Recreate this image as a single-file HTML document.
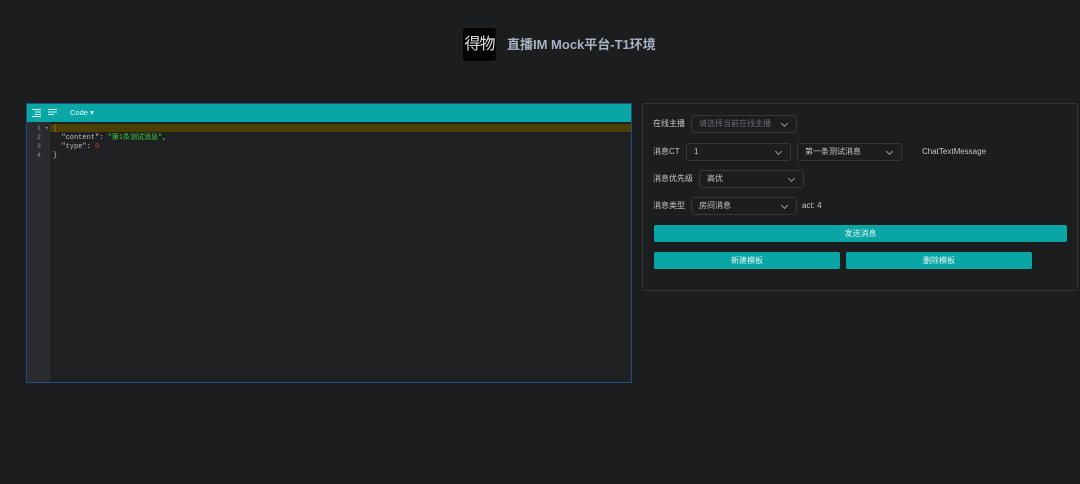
<!DOCTYPE html>
<html><head><meta charset="utf-8"><style>
*{margin:0;padding:0;box-sizing:border-box}
body{width:1080px;height:484px;background:#1c1d1f;font-family:"Liberation Sans","Noto Sans CJK SC",sans-serif;position:relative;overflow:hidden;color:#c9cdd2}
.abs{position:absolute}
.logo{left:463px;top:28px;width:33px;height:33px;background:#050505;border-radius:3px;color:#e0e0e0;font-size:16px;font-weight:normal;text-align:center;line-height:33px;letter-spacing:-1px}
.title{left:507px;top:36px;font-size:13px;font-weight:bold;color:#a7b3c2;line-height:18px}
.editor{left:26px;top:103px;width:606px;height:280px;border:1px solid #1f4f7a;background:#1f2022}
.tb{left:0;top:0;width:604px;height:18px;background:#0aa6a6}
.gut{left:0;top:18px;width:23px;height:260px;background:#292b2e}
.hl{left:23px;top:20px;width:581px;height:8px;background:#4a3f00}
.ln{font-family:"Liberation Mono",monospace;font-size:6.5px;line-height:8px;color:#8a8f95;position:absolute;left:10px}
.code{font-family:"Liberation Mono","Noto Sans CJK SC",monospace;font-size:7px;line-height:8px;color:#bfc3c8;position:absolute;left:26px;white-space:pre}
.panel{left:642px;top:103px;width:436px;height:188px;border:1px solid #303236;border-radius:2px}
.lb{font-size:8px;color:#c4c8cc;position:absolute;line-height:10px}
.sel{position:absolute;height:18px;border:1px solid #34363a;border-radius:3px;font-size:8px;line-height:16px;padding-left:7px;color:#c4c8cc}
.sel:after{content:"";position:absolute;right:9px;top:5px;width:4px;height:4px;border-right:1px solid #999;border-bottom:1px solid #999;transform:rotate(45deg)}
.btn{position:absolute;height:17px;background:#0aa6a6;border-radius:2px;font-size:8px;color:#e6f4f4;text-align:center;line-height:17px}
</style></head><body>
<div class="abs logo">得物</div>
<div class="abs title">直播IM Mock平台-T1环境</div>
<div class="abs editor">
 <div class="abs tb">
  <svg class="abs" style="left:5px;top:5px" width="10" height="8"><path d="M0 .5h9M3 3h6M3 5.5h6M0 7.5h9" stroke="#dff" stroke-width="1"/></svg>
  <svg class="abs" style="left:21px;top:5px" width="10" height="8"><path d="M0 .5h9M0 3h9M0 5.5h6" stroke="#dff" stroke-width="1"/></svg>
  <div class="abs" style="left:43px;top:4px;font-size:7.5px;color:#dff">Code ▾</div>
 </div>
 <div class="abs gut"></div>
 <div class="abs hl"></div>
 <div class="ln" style="top:21px">1 ▾</div><div class="ln" style="top:30px">2</div><div class="ln" style="top:39px">3</div><div class="ln" style="top:48px">4</div>
 <div class="code" style="top:21px;color:#a09060">{</div>
 <div class="code" style="top:30px">  "content": <span style="color:#3ecf3e">"第1条测试消息"</span>,</div>
 <div class="code" style="top:39px">  "type": <span style="color:#e03030">0</span></div>
 <div class="code" style="top:48px">}</div>
</div>
<div class="abs panel"></div>
<div class="lb" style="left:653px;top:119px">在线主播</div>
<div class="sel" style="left:691px;top:115px;width:106px;color:#666a70">请选择当前在线主播</div>
<div class="lb" style="left:653px;top:147px">消息CT</div>
<div class="sel" style="left:686px;top:143px;width:105px">1</div>
<div class="sel" style="left:797px;top:143px;width:105px">第一条测试消息</div>
<div class="lb" style="left:922px;top:147px">ChatTextMessage</div>
<div class="lb" style="left:653px;top:174px">消息优先级</div>
<div class="sel" style="left:699px;top:170px;width:105px">高优</div>
<div class="lb" style="left:653px;top:201px">消息类型</div>
<div class="sel" style="left:691px;top:197px;width:106px">房间消息</div>
<div class="lb" style="left:802px;top:201px">act: 4</div>
<div class="btn" style="left:654px;top:225px;width:413px">发送消息</div>
<div class="btn" style="left:654px;top:252px;width:186px">新建模板</div>
<div class="btn" style="left:846px;top:252px;width:186px">删除模板</div>
</body></html>
